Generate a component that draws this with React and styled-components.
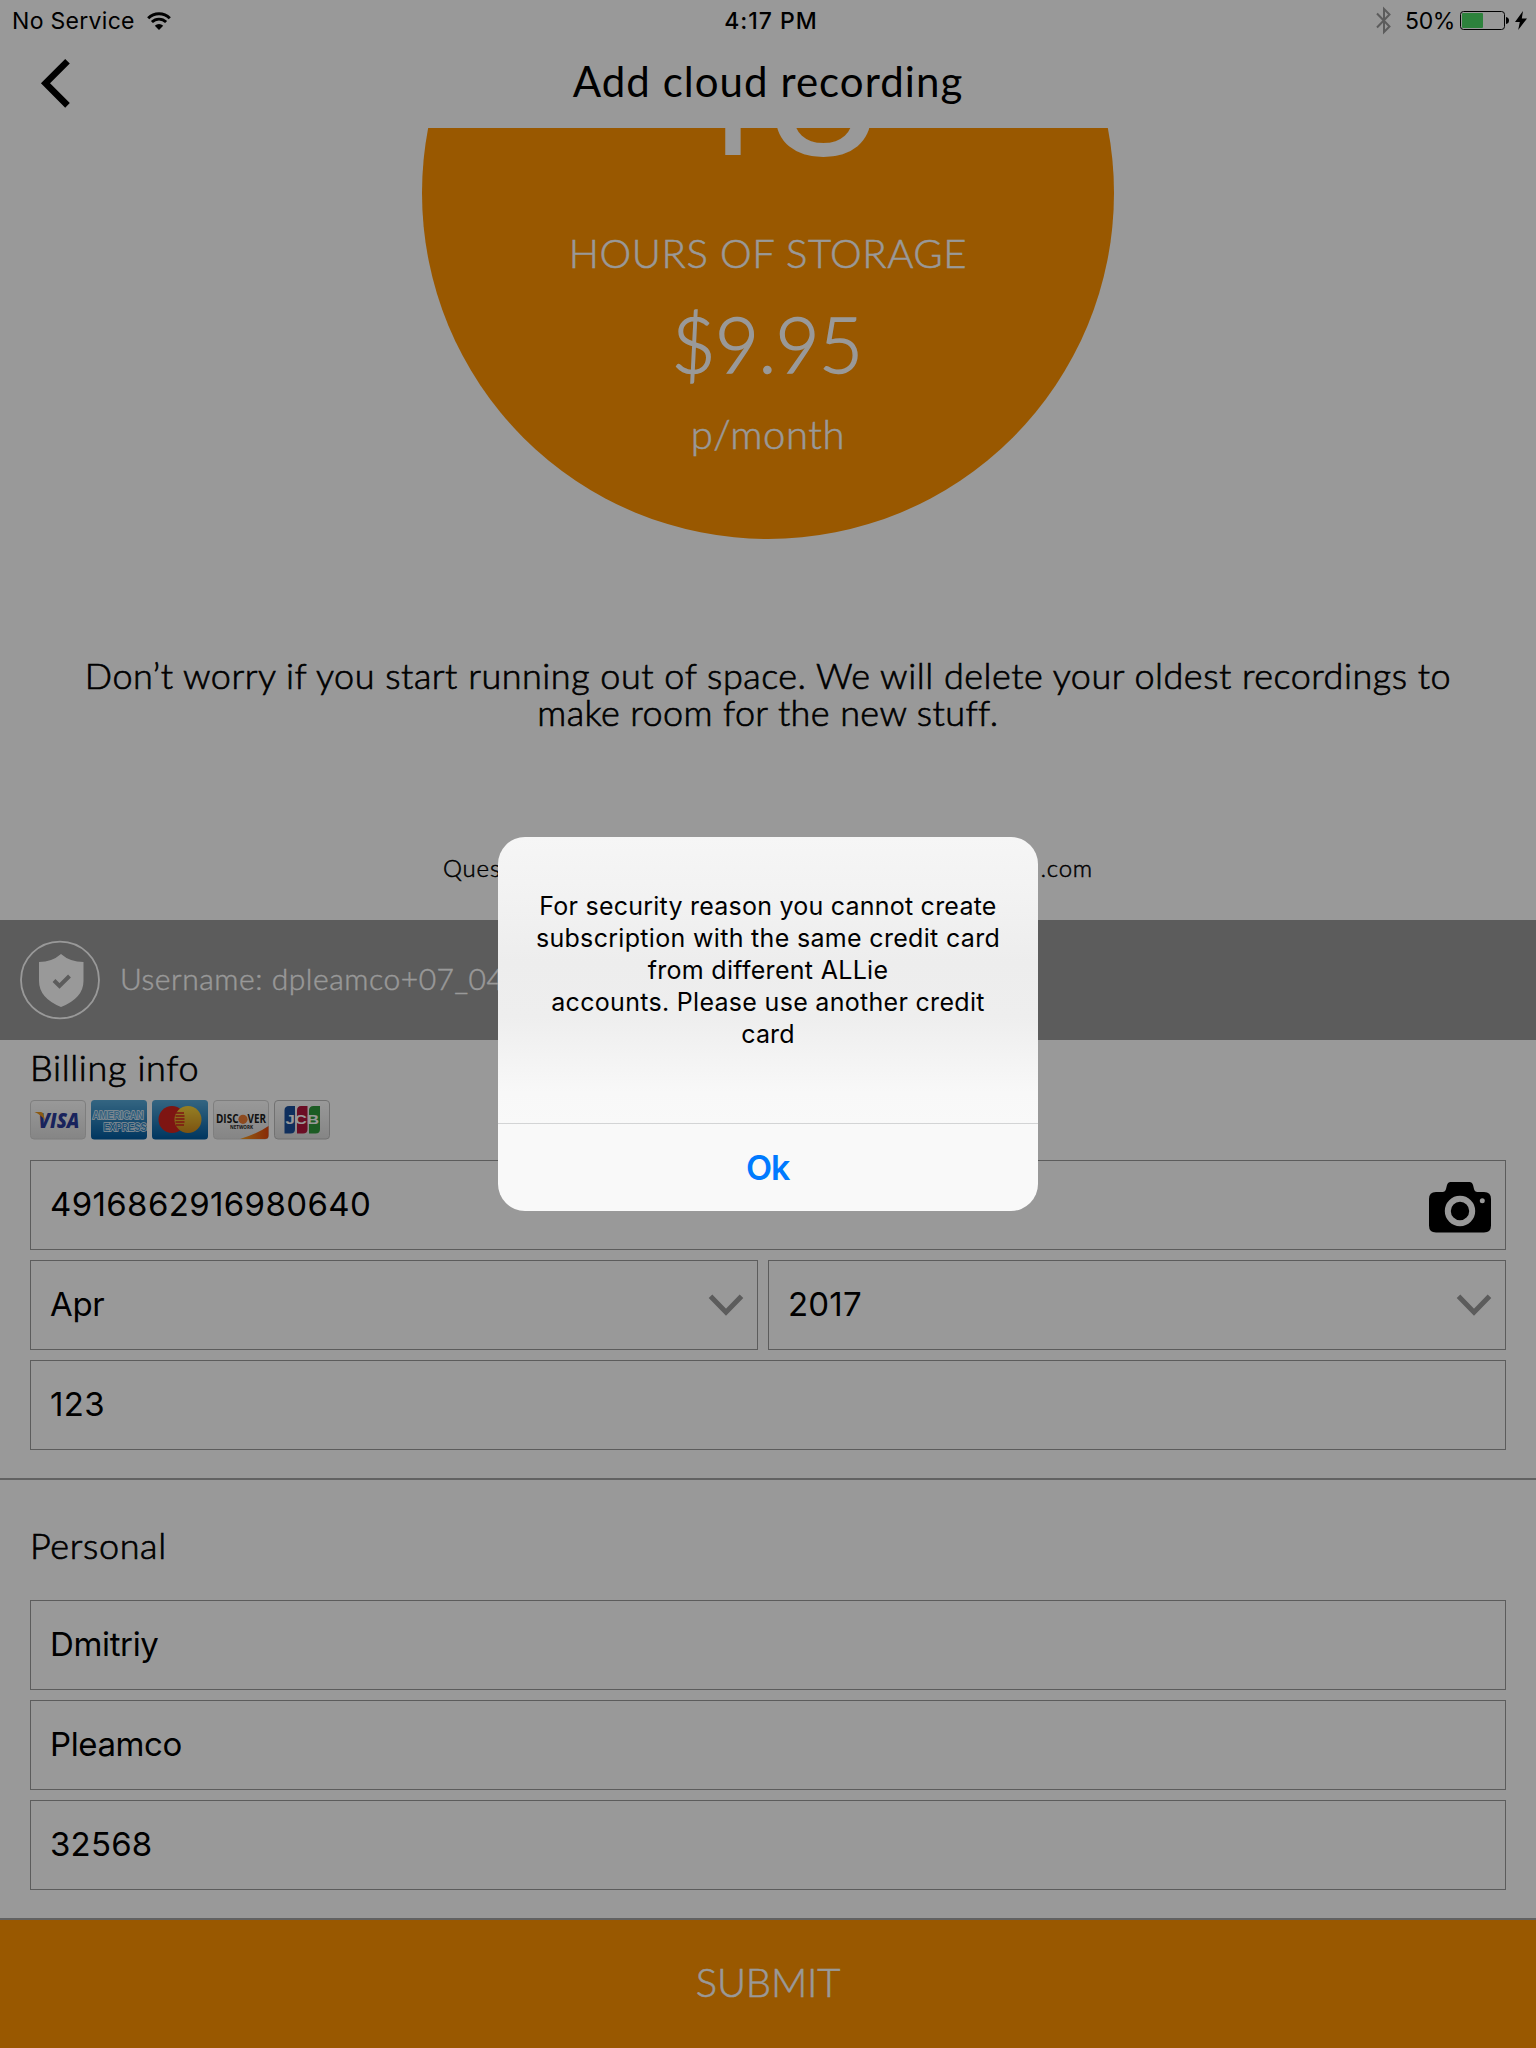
import React from "react";
import styled, { createGlobalStyle } from "styled-components";

const GlobalStyle = createGlobalStyle`
  html, body { margin: 0; padding: 0; background: #fff; }
  * { box-sizing: border-box; }
`;

const book = `"Lato", "Open Sans", sans-serif`;
const system = `"Inter", "Roboto", sans-serif`;

const Screen = styled.div`
  position: relative;
  width: 1536px;
  height: 2048px;
  overflow: hidden;
  display: flex;
  flex-direction: column;
  background: #fff;
  color: #000;
  font-family: ${book};
`;

const StatusBar = styled.div`
  display: grid;
  grid-template-columns: 1fr auto 1fr;
  align-items: center;
  height: 40px;
  padding: 1px 9px 0 12px;
  font: 400 23px/40px ${system};
`;

const StatusGroup = styled.div`
  display: flex;
  align-items: center;
  justify-content: ${(p) => (p.$end ? "flex-end" : "flex-start")};
  height: 39px;
`;

const StatusText = styled.span`
  font-weight: ${(p) => p.$weight || 400};
  letter-spacing: ${(p) => p.$ls || 0}px;
  margin: ${(p) => p.$margin || 0};
  line-height: 38px;
  white-space: nowrap;
`;

const Icon = styled.svg`
  display: block;
  flex: none;
  overflow: visible;
  margin: ${(p) => p.$margin || 0};
`;

const Header = styled.header`
  display: grid;
  grid-template-columns: 120px 1fr 120px;
  height: 88px;
  padding-bottom: 8px;
`;

const BackButton = styled.div`
  padding: 19px 0 0 41px;
`;

const Title = styled.h1`
  margin: 14px 0 0;
  text-align: center;
  font-size: 42px;
  line-height: 54px;
  font-weight: 400;
  letter-spacing: ${(p) => p.$ls}px;
`;

const Plan = styled.section`
  height: 792px;
  overflow: hidden;
  display: flex;
  flex-direction: column;
  align-items: center;
`;

const Disc = styled.div`
  flex: none;
  width: 692px;
  height: 692px;
  margin-top: -281px;
  padding-top: 133px;
  border-radius: 50%;
  background: #ff9300;
  color: #fff;
  display: flex;
  flex-direction: column;
  align-items: center;
`;

const DiscText = styled.div`
  font-size: ${(p) => p.$size}px;
  line-height: ${(p) => p.$line}px;
  font-weight: ${(p) => p.$weight || 300};
  letter-spacing: ${(p) => p.$ls || 0}px;
  margin-top: ${(p) => p.$top || 0}px;
  padding-right: ${(p) => p.$nudge || 0}px;
  -webkit-text-stroke: ${(p) => p.$stroke || 0}px currentColor;
  white-space: nowrap;
`;

const Note = styled.p`
  flex: none;
  margin: 118px 0 0;
  text-align: center;
  font-size: 36px;
  line-height: 37px;
  font-weight: 300;
  -webkit-text-stroke: 0.7px currentColor;
`;

const NoteLine = styled.span`
  display: block;
  white-space: nowrap;
  letter-spacing: ${(p) => p.$ls}px;
`;

const Contact = styled.p`
  flex: none;
  display: flex;
  justify-content: space-between;
  width: 650px;
  margin: 122px 0 0;
  font-size: 24px;
  line-height: 30px;
  font-weight: 300;
  -webkit-text-stroke: 0.5px currentColor;
  letter-spacing: 0.8px;
`;

const UserBar = styled.div`
  display: flex;
  align-items: center;
  height: 120px;
  padding: 0 20px;
  background: #999;
  color: #fff;
  font-size: 30px;
  font-weight: 300;
`;

const UserText = styled.span`
  padding-bottom: 4px;
  margin-left: 20px;
  -webkit-text-stroke: 0.4px currentColor;
  letter-spacing: ${(p) => p.$ls}px;
`;

const Section = styled.section`
  display: flex;
  flex-direction: column;
  padding: ${(p) => p.$top}px 30px 28px;
  border-bottom: 2px solid #a3a3a3;
`;

const SectionTitle = styled.h2`
  margin: 0 0 ${(p) => p.$bottom}px;
  font-size: 36px;
  line-height: 44px;
  font-weight: 300;
  -webkit-text-stroke: 0.7px currentColor;
  letter-spacing: ${(p) => p.$ls}px;
`;

const Cards = styled.div`
  display: flex;
  gap: 5px;
  margin-bottom: 20px;
`;

const Fields = styled.div`
  display: flex;
  flex-direction: column;
  gap: 10px;
`;

const FieldRow = styled.div`
  display: grid;
  grid-template-columns: 728px 738px;
  gap: 10px;
`;

const Field = styled.div`
  display: flex;
  align-items: center;
  justify-content: space-between;
  height: 90px;
  padding: 0 14px 0 19px;
  border: 1px solid #999;
  font: 400 33px/40px ${system};
`;

const Value = styled.span`
  padding-bottom: 2px;
  letter-spacing: ${(p) => p.$ls || 0}px;
`;

const Submit = styled.div`
  height: 128px;
  padding-bottom: 4px;
  display: flex;
  align-items: center;
  justify-content: center;
  background: #ff9300;
  color: #fff;
  font-size: 40px;
  font-weight: 300;
  -webkit-text-stroke: 0.5px currentColor;
  letter-spacing: ${(p) => p.$ls}px;
`;

const Backdrop = styled.div`
  position: absolute;
  inset: 0;
  display: flex;
  align-items: center;
  justify-content: center;
  background: rgba(0, 0, 0, 0.4);
`;

const Dialog = styled.div`
  width: 540px;
  height: 374px;
  border-radius: 27px;
  overflow: hidden;
  display: flex;
  flex-direction: column;
  background: linear-gradient(#f6f6f6 0, #f2f2f2 60px, #ededed 125px, #eeeeee 180px, #f8f8f8 255px, #f9f9f9 290px);
  font-family: ${system};
`;

const Message = styled.div`
  flex: 1;
  padding-top: 53px;
  text-align: center;
  font-size: 25px;
  line-height: 32px;
`;

const MessageLine = styled.span`
  display: block;
  white-space: nowrap;
  letter-spacing: ${(p) => p.$ls}px;
`;

const OkButton = styled.div`
  height: 88px;
  padding-right: 1px;
  border-top: 1px solid #d3d4d5;
  text-align: center;
  color: #007aff;
  font-size: 34px;
  line-height: 88px;
  font-weight: 600;
  letter-spacing: -1.3px;
`;

function Chevron() {
  return (
    <Icon width="35" height="22" viewBox="0 0 35 22">
      <path d="M2.500 2.200 18 18.200 33.500 2.200" fill="none" stroke="#999" strokeWidth="5" />
    </Icon>
  );
}

function Camera() {
  return (
    <Icon width="62" height="51" viewBox="0 0 62 51" $margin="5px 0 0">
      <path d="M7 10h6.500q2.800 0 3.500-3L18 3q1-3 3.500-3h19q2.500 0 3.500 3l1 4q.7 3 3.500 3H55q7 0 7 7v26.500q0 7-7 7H7q-7 0-7-7V17q0-7 7-7z" />
      <circle cx="31" cy="29" r="12.200" fill="none" stroke="#fff" strokeWidth="6" />
      <circle cx="53.300" cy="18.800" r="2.500" fill="#fff" />
    </Icon>
  );
}

function CardArt() {
  const frame = { x: 0.5, y: 0.5, width: 55, height: 38.5, rx: 3.5 };
  return (
    <Cards>
      <Icon width="56" height="40" viewBox="0 0 56 40">
        <defs>
          <linearGradient id="paper" x2="0" y2="1">
            <stop offset="0" stopColor="#fff" />
            <stop offset="1" stopColor="#dedede" />
          </linearGradient>
          <linearGradient id="blue" x2="0" y2="1">
            <stop offset="0" stopColor="#57a9d8" />
            <stop offset="1" stopColor="#005a9f" />
          </linearGradient>
          <linearGradient id="amber" x2="0" y2="1">
            <stop offset="0" stopColor="#f8d43c" />
            <stop offset="1" stopColor="#cf8b1c" />
          </linearGradient>
          <linearGradient id="flare" x2="1">
            <stop offset="0" stopColor="#f7a01d" />
            <stop offset="1" stopColor="#e2480f" />
          </linearGradient>
        </defs>
        <rect {...frame} fill="url(#paper)" stroke="#d2d2d2" />
        <text x="8.500" y="27.500" fontFamily="Open Sans, sans-serif" fontStyle="italic" fontWeight="800" fontSize="21" textLength="41" lengthAdjust="spacingAndGlyphs" fill="#2a3b9a">VISA</text>
        <path d="M4.500 12h6.500q2 .2 2.500 2.500l1.500 6Q11 14.500 4.500 12z" fill="#e8961f" />
      </Icon>
      <Icon width="56" height="40" viewBox="0 0 56 40">
        <rect width="56" height="39.500" rx="3.500" fill="url(#blue)" />
        <g fontFamily="Liberation Sans, sans-serif" fontWeight="700" fontSize="11.500" fill="#5ba6d6" stroke="#e6f1f8" strokeWidth="1.600" paintOrder="stroke">
          <text x="1.500" y="19" textLength="51" lengthAdjust="spacingAndGlyphs">AMERICAN</text>
          <text x="12.500" y="30.500" fill="#2f86c2" textLength="43" lengthAdjust="spacingAndGlyphs">EXPRESS</text>
        </g>
      </Icon>
      <Icon width="56" height="40" viewBox="0 0 56 40">
        <rect width="56" height="39.500" rx="3.500" fill="url(#blue)" />
        <circle cx="20" cy="19.500" r="13.500" fill="#d2231f" />
        <circle cx="36" cy="19.500" r="13.500" fill="url(#amber)" />
        <path d="M24 13h8M23.500 16h9M23.500 19h9M23.500 22h9M24 25h8" stroke="#d2231f" strokeWidth="1.500" />
      </Icon>
      <Icon width="56" height="40" viewBox="0 0 56 40">
        <rect {...frame} fill="url(#paper)" stroke="#d2d2d2" />
        <path d="M27 39Q44 34 55.500 26v9.500q0 3.500-3.500 3.500z" fill="url(#flare)" />
        <circle cx="30" cy="19.300" r="4.600" fill="#ec7c34" />
        <g fontFamily="Open Sans, sans-serif" fontWeight="700" fill="#1b1b1b">
          <text x="3" y="23.300" fontSize="12" textLength="22.500" lengthAdjust="spacingAndGlyphs">DISC</text>
          <text x="34.500" y="23.300" fontSize="12" textLength="18.500" lengthAdjust="spacingAndGlyphs">VER</text>
          <text x="17" y="28.700" fontSize="4.500" textLength="23" lengthAdjust="spacingAndGlyphs">NETWORK</text>
        </g>
      </Icon>
      <Icon width="56" height="40" viewBox="0 0 56 40">
        <rect {...frame} fill="url(#paper)" stroke="#bdbdbd" />
        <path d="M15 6h6v23q0 4.500-4.500 4.500h-6V10.500Q10.500 6 15 6z" fill="#1a4f9c" />
        <path d="M27 6h6.500v23q0 4.500-4.500 4.500h-6V10.500Q23 6 27 6z" fill="#b3163c" />
        <path d="M39.500 6H46v23q0 4.500-4.500 4.500H35V10.500Q35 6 39.500 6z" fill="#2f9a3c" />
        <text x="11.500" y="24" fontFamily="Liberation Sans, sans-serif" fontWeight="700" fontSize="12" textLength="33.500" lengthAdjust="spacingAndGlyphs" fill="#fff">JCB</text>
      </Icon>
    </Cards>
  );
}

export default function App() {
  return (
    <Screen>
      <GlobalStyle />
      <StatusBar>
        <StatusGroup>
          <StatusText $ls={0.3}>No Service</StatusText>
          <Icon width="24" height="18" viewBox="0 0 24 18" $margin="0 0 0 12px">
            <path d="M1.200 6.200a15.300 15.300 0 0 1 21.600 0" fill="none" stroke="#000" strokeWidth="3" />
            <path d="M4.900 10.100a10 10 0 0 1 14.200 0" fill="none" stroke="#000" strokeWidth="2.900" />
            <path d="M12 18 7.800 13.700a6 6 0 0 1 8.400 0z" />
          </Icon>
        </StatusGroup>
        <StatusText $weight={500} $ls={1} $margin="0 0 0 3px">4:17 PM</StatusText>
        <StatusGroup $end>
          <Icon width="15" height="27" viewBox="0 0 15 27">
            <path d="M1 6.500 13.500 19.500 8 25V2l5.500 5.500L1 20.500" fill="none" stroke="#999" strokeWidth="2" />
          </Icon>
          <StatusText $ls={-0.4} $margin="0 5px 0 14px">50%</StatusText>
          <Icon width="49" height="19" viewBox="0 0 49 19">
            <rect x="0.500" y="0.500" width="44" height="18" rx="3" fill="none" stroke="#000" />
            <rect x="2" y="2" width="21" height="15" rx="1" fill="#4cd964" />
            <path d="M46 6q3 .5 3 3.500T46 13z" />
          </Icon>
          <Icon width="12" height="19" viewBox="0 0 12 19" $margin="0 0 0 6px">
            <path d="M8 0 0 11h4.800L3.200 19 12 7.500H6.800z" />
          </Icon>
        </StatusGroup>
      </StatusBar>
      <Header>
        <BackButton>
          <Icon width="29" height="49" viewBox="0 0 29 49">
            <path d="M26.500 2.200 4.500 24.300 26.500 46.400" fill="none" stroke="#000" strokeWidth="6.500" />
          </Icon>
        </BackButton>
        <Title $ls={1.05}>Add cloud recording</Title>
      </Header>
      <Plan>
        <Disc>
          <DiscText $size={196} $line={200} $weight={400} $ls={-1} $nudge={3}>48</DiscText>
          <DiscText $size={40} $line={60} $top={43} $ls={0.6} $stroke={0.5}>HOURS OF STORAGE</DiscText>
          <DiscText $size={76} $line={90} $top={16} $ls={-0.6} $stroke={1.4} $nudge={2}>$9.95</DiscText>
          <DiscText $size={40} $line={60} $top={15} $ls={0.6} $stroke={0.5}>p/month</DiscText>
        </Disc>
        <Note>
          <NoteLine $ls={0.51}>Don’t worry if you start running out of space. We will delete your oldest recordings to</NoteLine>
          <NoteLine $ls={0.4}>make room for the new stuff.</NoteLine>
        </Note>
        <Contact>
          <span>Ques</span>
          <span>.com</span>
        </Contact>
      </Plan>
      <UserBar>
        <Icon width="80" height="80" viewBox="0 0 80 80">
          <ellipse cx="40" cy="40" rx="39" ry="38.300" fill="none" stroke="#fff" strokeWidth="1.800" />
          <path d="M41 14q9 8 22.500 8v19q0 17-22.500 26Q19 58 19 41V22q13 0 22-8z" fill="#fff" />
          <path d="m34 40.500 5.500 5.500L49.500 36" fill="none" stroke="#999" strokeWidth="4" />
        </Icon>
        <UserText $ls={0.55}>Username: dpleamco+07_04</UserText>
      </UserBar>
      <Section $top={5}>
        <SectionTitle $bottom={11} $ls={0.65}>Billing info</SectionTitle>
        <CardArt />
        <Fields>
          <Field>
            <Value $ls={0.36}>4916862916980640</Value>
            <Camera />
          </Field>
          <FieldRow>
            <Field>
              <Value $ls={-0.3}>Apr</Value>
              <Chevron />
            </Field>
            <Field>
              <Value $ls={0.2}>2017</Value>
              <Chevron />
            </Field>
          </FieldRow>
          <Field>
            <Value $ls={0.4}>123</Value>
          </Field>
        </Fields>
      </Section>
      <Section $top={43}>
        <SectionTitle $bottom={33} $ls={0.65}>Personal</SectionTitle>
        <Fields>
          <Field>
            <Value $ls={-0.35}>Dmitriy</Value>
          </Field>
          <Field>
            <Value $ls={-0.4}>Pleamco</Value>
          </Field>
          <Field>
            <Value $ls={0.2}>32568</Value>
          </Field>
        </Fields>
      </Section>
      <Submit $ls={-0.2}>SUBMIT</Submit>
      <Backdrop>
        <Dialog>
          <Message>
            <MessageLine $ls={0.23}>For security reason you cannot create</MessageLine>
            <MessageLine $ls={0.32}>subscription with the same credit card</MessageLine>
            <MessageLine $ls={0.3}>from different ALLie</MessageLine>
            <MessageLine $ls={0.3}>accounts. Please use another credit</MessageLine>
            <MessageLine $ls={0.1}>card</MessageLine>
          </Message>
          <OkButton>Ok</OkButton>
        </Dialog>
      </Backdrop>
    </Screen>
  );
}
